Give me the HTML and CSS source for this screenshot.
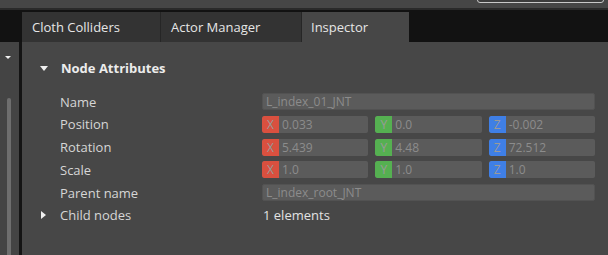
FILE: index.html
```html
<!DOCTYPE html>
<html>
<head>
<meta charset="utf-8">
<link rel="stylesheet" href="styles.css">
</head>
<body>
<div class="top">
  <div class="top-input"></div>
</div>
<div class="tabbar">
  <div class="tabbar-left"></div>
  <div class="tab">Cloth Colliders</div>
  <div class="tab">Actor Manager</div>
  <div class="tab active">Inspector</div>
  <div class="tabbar-fill"></div>
</div>
<div class="main">
  <div class="side">
    <div class="side-arrow"></div>
    <div class="scrollbar"></div>
  </div>
  <div class="divider"></div>
  <div class="inspector">
    <div class="section-head">
      <span class="tri-down"></span>
      <span class="section-title">Node Attributes</span>
    </div>
    <div class="grid">
      <div class="label">Name</div>
      <div class="field text">L_index_01_JNT</div>

      <div class="label">Position</div>
      <div class="vec">
        <div class="field"><span class="badge x">X</span><span class="val">0.033</span></div>
        <div class="field"><span class="badge y">Y</span><span class="val">0.0</span></div>
        <div class="field"><span class="badge z">Z</span><span class="val">-0.002</span></div>
      </div>

      <div class="label">Rotation</div>
      <div class="vec">
        <div class="field"><span class="badge x">X</span><span class="val">5.439</span></div>
        <div class="field"><span class="badge y">Y</span><span class="val">4.48</span></div>
        <div class="field"><span class="badge z">Z</span><span class="val">72.512</span></div>
      </div>

      <div class="label">Scale</div>
      <div class="vec">
        <div class="field"><span class="badge x">X</span><span class="val">1.0</span></div>
        <div class="field"><span class="badge y">Y</span><span class="val">1.0</span></div>
        <div class="field"><span class="badge z">Z</span><span class="val">1.0</span></div>
      </div>

      <div class="label">Parent name</div>
      <div class="field text">L_index_root_JNT</div>

      <div class="label child"><span class="tri-right"></span>Child nodes</div>
      <div class="plain">1 elements</div>
    </div>
  </div>
</div>
</body>
</html>
```
FILE: styles.css
```css
html, body {
  margin: 0;
  padding: 0;
  width: 608px;
  height: 255px;
  overflow: hidden;
  background: #474747;
  font-family: "Open Sans", "DejaVu Sans", sans-serif;
}

.top {
  height: 8px;
  background: #464646;
  border-bottom: 2px solid #2a2a2a;
  position: relative;
  overflow: hidden;
}

.top-input {
  position: absolute;
  left: 477px;
  width: 127px;
  top: -8px;
  height: 11px;
  border: 1px solid #c8c8c8;
  border-radius: 3px;
  background: #3c3c3c;
  box-sizing: border-box;
}

.tabbar {
  display: flex;
  height: 32px;
  background: #121212;
}

.tabbar-left {
  width: 22px;
}

.tab {
  margin-top: 2px;
  height: 30px;
  display: flex;
  align-items: center;
  background: #333333;
  color: #e6e6e6;
  font-size: 13px;
  padding: 0 10px;
  box-sizing: border-box;
  border-right: 1px solid #262626;
}

.tab:nth-child(2) { width: 139px; }
.tab:nth-child(3) { width: 141px; }

.tab.active {
  background: #474747;
  border-right: none;
  width: 107px;
  padding-left: 9px;
}

.tabbar-fill {
  flex: 1;
}

.main {
  display: flex;
  height: 213px;
  overflow: hidden;
}

.side {
  width: 19px;
  background: #444444;
  overflow: hidden;
}

.side-arrow {
  margin: 14px 0 0 5px;
  width: 0;
  height: 0;
  border-left: 3px solid transparent;
  border-right: 3px solid transparent;
  border-top: 3px solid #f0f0f0;
}

.scrollbar {
  margin: 39px 0 0 7px;
  width: 4px;
  height: 160px;
  background: #6e6e6e;
  border-radius: 2px 2px 0 0;
}

.divider {
  width: 3px;
  background: #141414;
}

.inspector {
  flex: 1;
  background: #474747;
}

.section-head {
  display: flex;
  align-items: center;
  height: 18px;
  margin-top: 17px;
  padding-left: 18px;
}

.tri-down {
  width: 0;
  height: 0;
  border-left: 4px solid transparent;
  border-right: 4px solid transparent;
  border-top: 5px solid #f0f0f0;
  margin-right: 13px;
}

.section-title {
  color: #ececec;
  font-weight: bold;
  font-size: 13px;
}

.grid {
  display: grid;
  grid-template-columns: 202px 333px;
  grid-auto-rows: 17px;
  row-gap: 5.75px;
  margin-top: 16px;
  padding-left: 38px;
}

.label {
  color: #d6d6d6;
  font-size: 13px;
  display: flex;
  align-items: center;
  position: relative;
}

.tri-right {
  position: absolute;
  left: -19px;
  top: 4px;
  width: 0;
  height: 0;
  border-top: 4px solid transparent;
  border-bottom: 4px solid transparent;
  border-left: 5px solid #f0f0f0;
}

.field {
  background: #5b5b5b;
  border: 1px solid #525252;
  border-radius: 2px;
  box-sizing: border-box;
  display: flex;
  align-items: center;
  color: #8c8c8c;
  font-size: 12px;
  overflow: hidden;
}

.field.text {
  padding-left: 3px;
}

.vec {
  display: grid;
  grid-template-columns: repeat(3, 1fr);
  column-gap: 7px;
}

.vec .field {
  border: none;
}

.badge {
  width: 17px;
  height: 100%;
  display: flex;
  align-items: center;
  justify-content: center;
  color: #9a9a9a;
  font-size: 12px;
  border-radius: 2px 0 0 2px;
}

.badge.x { background: #d9503f; }
.badge.y { background: #55b051; }
.badge.z { background: #3f7fe6; }

.val {
  padding-left: 3px;
}

.plain {
  color: #e2e2e2;
  font-size: 13px;
  display: flex;
  align-items: center;
  padding-left: 1px;
}
```
